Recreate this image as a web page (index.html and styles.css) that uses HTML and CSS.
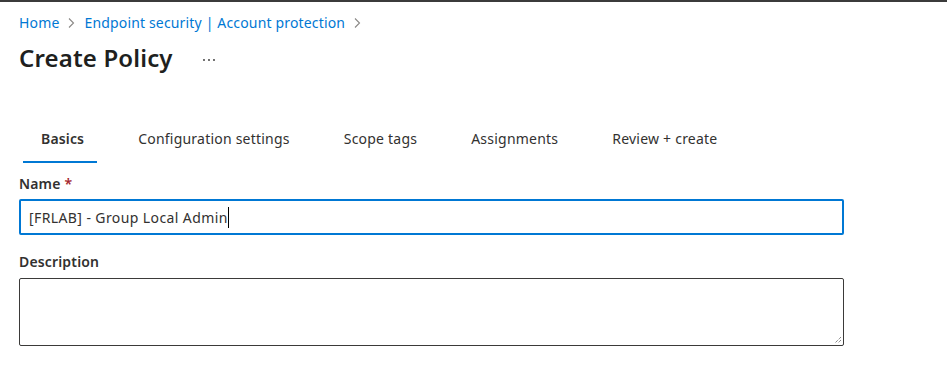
FILE: index.html
```html
<!DOCTYPE html>
<html>
<head>
<meta charset="utf-8">
<link rel="stylesheet" href="styles.css">
</head>
<body>
<div class="topbar"></div>
<main class="page">
  <nav class="crumbs">
    <a class="crumb">Home</a>
    <svg class="chev" width="8" height="12" viewBox="0 0 8 12"><path d="M2 1.5l4.5 4.5L2 10.5" fill="none" stroke="#8a8886" stroke-width="1.1"/></svg>
    <a class="crumb">Endpoint security | Account protection</a>
    <svg class="chev" width="8" height="12" viewBox="0 0 8 12"><path d="M2 1.5l4.5 4.5L2 10.5" fill="none" stroke="#8a8886" stroke-width="1.1"/></svg>
  </nav>
  <div class="title-row">
    <h1 class="title">Create Policy</h1>
    <svg class="more" width="14" height="4" viewBox="0 0 14 4"><circle cx="2" cy="2" r="0.9" fill="#323130"/><circle cx="7" cy="2" r="0.9" fill="#323130"/><circle cx="12" cy="2" r="0.9" fill="#323130"/></svg>
  </div>
  <div class="tabs">
    <div class="tab active">Basics</div>
    <div class="tab">Configuration settings</div>
    <div class="tab">Scope tags</div>
    <div class="tab">Assignments</div>
    <div class="tab">Review + create</div>
  </div>
  <form class="form">
    <label class="label">Name <span class="req">*</span></label>
    <div class="input focused"><span class="value">[FRLAB] - Group Local Admin</span><span class="caret"></span></div>
    <label class="label desc">Description</label>
    <div class="textarea">
      <svg class="grip" width="10" height="10" viewBox="0 0 10 10"><path d="M9 3L3 9M9 6L6 9" stroke="#555" stroke-width="1" stroke-dasharray="1 1"/></svg>
    </div>
  </form>
</main>
</body>
</html>
```
FILE: styles.css
```css
html, body {
  margin: 0;
  padding: 0;
  background: #fff;
}
body {
  font-family: "Noto Sans", "Open Sans", sans-serif;
  color: #323130;
  font-size: 14px;
  letter-spacing: 0.16px;
}
.topbar {
  height: 2px;
  background: #3b3b3b;
}
.page {
  padding: 0 0 0 19px;
}
.crumbs {
  display: flex;
  align-items: center;
  height: 20px;
  margin-top: 11px;
  line-height: 20px;
}
.crumb {
  color: #0078d4;
  font-size: 14px;
}
.chev {
  margin: 0 9px 0 8px;
}
.title-row {
  display: flex;
  align-items: center;
  height: 32px;
  margin-top: 9px;
}
.title {
  margin: 0;
  font-size: 24px;
  font-weight: 600;
  line-height: 32px;
  color: #201f1e;
  letter-spacing: 0.15px;
}
.more {
  margin-left: 29px;
  margin-top: 4px;
}
.tabs {
  display: flex;
  gap: 23px;
  margin-top: 55px;
  padding-left: 4px;
}
.tab {
  padding: 0 13px 12px 18px;
  line-height: 20px;
  border-bottom: 2px solid transparent;
  white-space: nowrap;
  letter-spacing: 0.22px;
}
.tab.active {
  font-weight: 600;
  letter-spacing: 0.16px;
  border-bottom-color: #0078d4;
}
.form {
  display: flex;
  flex-direction: column;
  margin-top: 11px;
  width: 825px;
}
.label {
  font-weight: 600;
  line-height: 20px;
  color: #323130;
}
.req {
  color: #a4262c;
}
.input {
  margin-top: 5px;
  height: 36px;
  box-sizing: border-box;
  border: 2px solid #0078d4;
  border-radius: 2px;
  display: flex;
  align-items: center;
  padding-left: 8px;
}
.value {
  color: #323130;
  letter-spacing: 0.4px;
}
.caret {
  width: 1px;
  height: 21px;
  background: #000;
  margin-left: 0;
}
.desc {
  margin-top: 17px;
}
.textarea {
  margin-top: 6px;
  height: 68px;
  box-sizing: border-box;
  border: 1px solid #3b3a39;
  border-radius: 2px;
  position: relative;
}
.grip {
  position: absolute;
  right: 1px;
  bottom: 1px;
}
```
